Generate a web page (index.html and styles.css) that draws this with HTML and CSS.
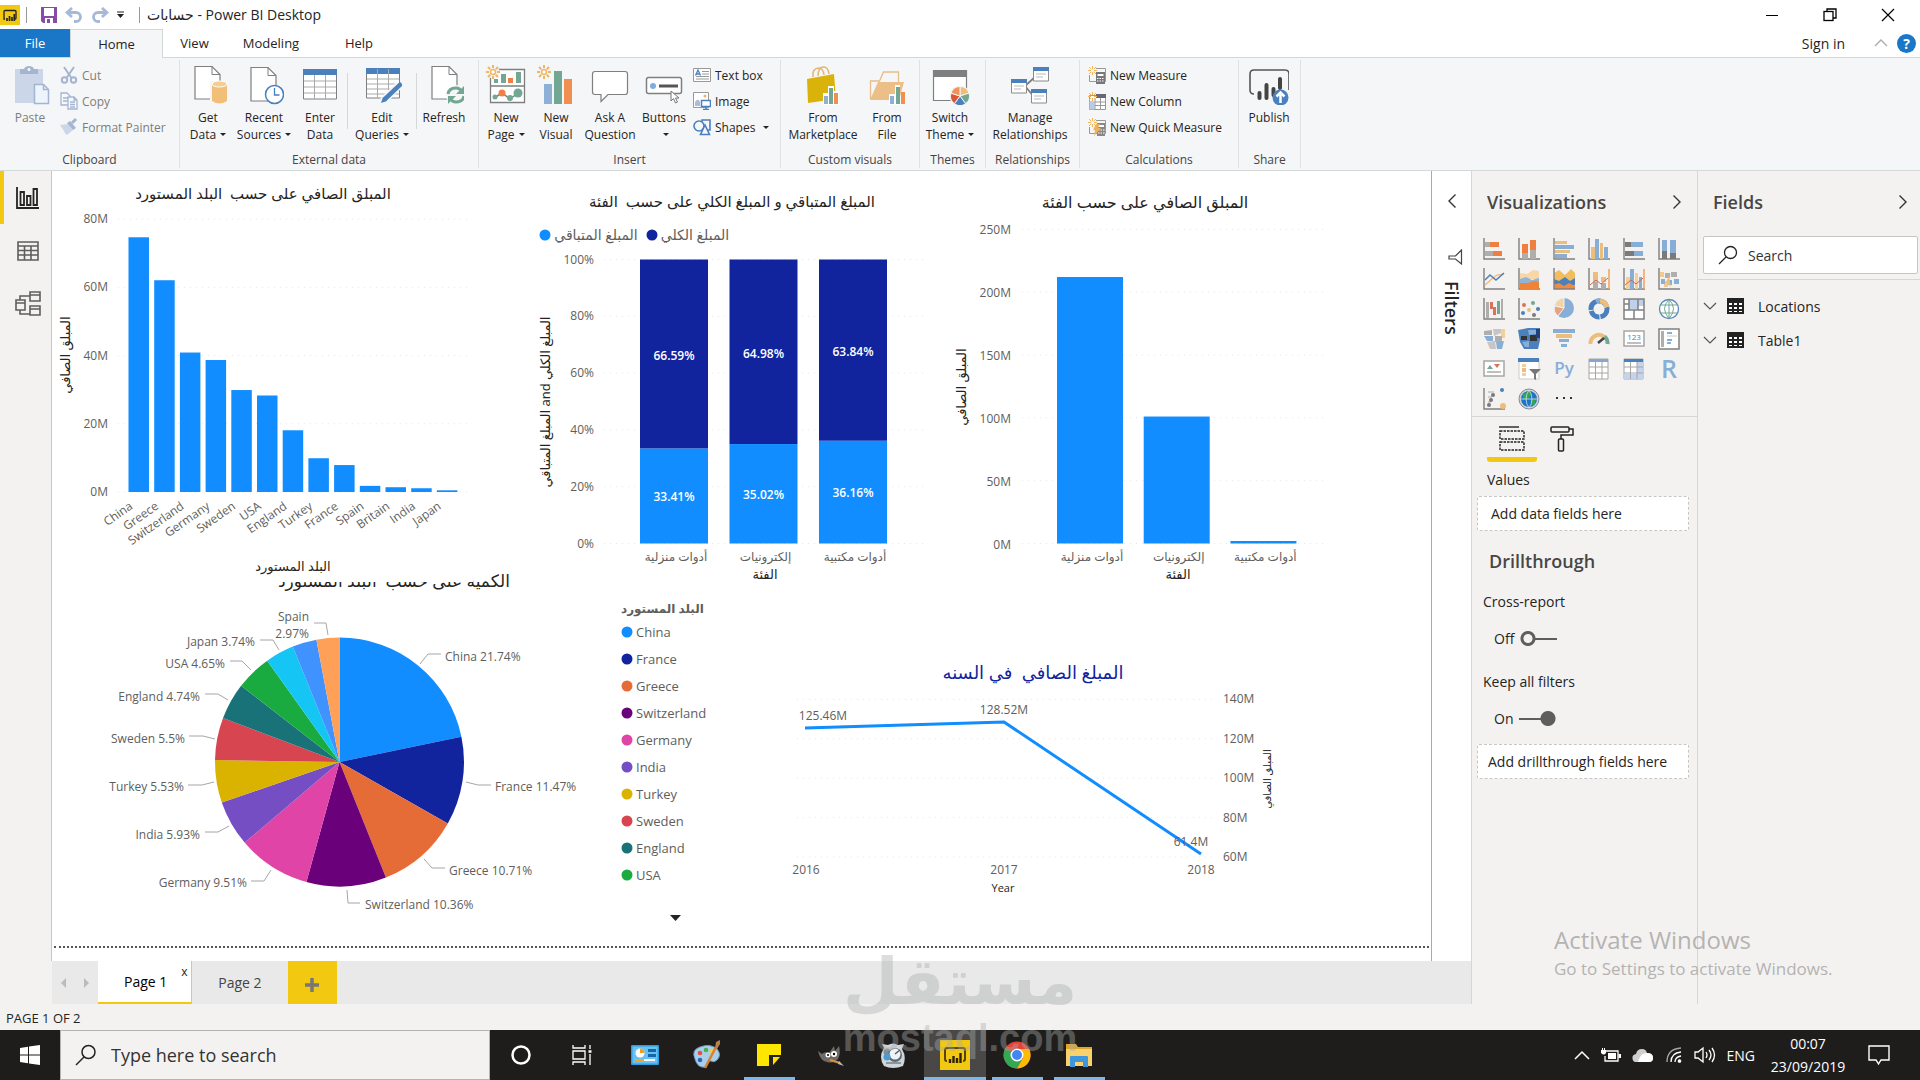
FILE: index.html
```html
<!DOCTYPE html>
<html lang="en">
<head>
    <meta charset="UTF-8">
    <meta name="viewport" content="width=device-width, initial-scale=1.0">
    <title>حسابات - Power BI Desktop</title>
    <link rel="stylesheet" href="styles.css">
</head>
<body>
<header class="titlebar">
    <svg class="app-logo" width="20" height="20" viewBox="0 0 20 20"><rect width="20" height="20" fill="#f2c811"/><path d="M5 14H4V6.500Q4 5.500 5 5.500H15Q16 5.500 16 6.500V13Q16 14 15 14" fill="none" stroke="#222" stroke-width="1.300"/><path d="M7 16v-3M9.500 16v-5M12 16v-4M14.300 16V9" stroke="#222" stroke-width="1.700"/></svg>
    <span class="divider"></span>
    <button class="quick" aria-label="Save"><svg width="16" height="16" viewBox="0 0 16 16"><path d="M0 0h16v16H2l-2-2z" fill="#864da8"/><rect x="3" y="1" width="10" height="8" fill="#fff"/><rect x="4" y="11" width="8" height="5" fill="#fff"/><rect x="6" y="12" width="3" height="4" fill="#864da8"/></svg></button>
    <button class="quick" aria-label="Undo"><svg width="18" height="16" viewBox="0 0 18 16"><path d="M7 1L2 5.500l5 4.500M2 5.500h9a4.500 4.500 0 0 1 0 9H9" fill="none" stroke="#a6b9d8" stroke-width="2.800"/></svg></button>
    <button class="quick" aria-label="Redo"><svg width="18" height="16" viewBox="0 0 18 16"><path d="M11 1l5 4.500-5 4.500M16 5.500H7a4.500 4.500 0 0 0 0 9h2" fill="none" stroke="#a6b9d8" stroke-width="2.800"/></svg></button>
    <button class="quick" aria-label="Customize"><svg width="8" height="8" viewBox="0 0 8 8"><path d="M0 1h7" stroke="#222"/><path d="M0 3h7L3.500 7z" fill="#222"/></svg></button>
    <span class="divider"></span>
    <span class="window-title">حسابات - Power BI Desktop</span>
    <div class="window-buttons">
        <button aria-label="Minimize"><svg width="14" height="14" viewBox="0 0 14 14"><path d="M1 7.500h12" stroke="#000"/></svg></button>
        <button aria-label="Restore"><svg width="14" height="14" viewBox="0 0 14 14" fill="none" stroke="#000" stroke-width="1.300"><rect x="1" y="3.500" width="9" height="9"/><path d="M4 3.500V1h9v9h-3"/></svg></button>
        <button aria-label="Close"><svg width="14" height="14" viewBox="0 0 14 14"><path d="M1 1l12 12M13 1L1 13" stroke="#000" stroke-width="1.200"/></svg></button>
    </div>
</header>

<nav class="ribbon-tabs">
    <a class="file" href="#">File</a>
    <a class="home" href="#">Home</a>
    <a class="view" href="#">View</a>
    <a class="modeling" href="#">Modeling</a>
    <a class="help" href="#">Help</a>
    <div class="account">
        <a href="#">Sign in</a>
        <button aria-label="Collapse ribbon"><svg width="14" height="8" viewBox="0 0 14 8"><path d="M1 7l6-6 6 6" fill="none" stroke="#aaa" stroke-width="1.300"/></svg></button>
        <button class="help-button" aria-label="Help">?</button>
    </div>
</nav>

<div class="ribbon">
    <section class="group clipboard">
        <div class="tools">
            <button class="big disabled">
                <svg width="40" height="40" viewBox="0 0 40 40"><path d="M5 4h28v34H5z" fill="#cbd6e8"/><path d="M10 9V4h4q1-3 5-3t5 3h4v5z" fill="#a4b5d1"/><circle cx="19" cy="4.500" r="1.500" fill="#f5f6f7"/><path d="M24.500 19.500h9l5 5v14h-14z" fill="#eef4fd" stroke="#a4b5d1" stroke-width="1.500"/><path d="M33.500 19.500v5h5" fill="none" stroke="#a4b5d1" stroke-width="1.500"/></svg>
                <span>Paste</span>
            </button>
            <div class="stack">
                <button class="small disabled"><svg width="18" height="18" viewBox="0 0 18 18" fill="none" stroke="#a4b5d1" stroke-width="2"><path d="M4 1l7.500 11M14 1L6.500 12"/><circle cx="4.500" cy="14" r="2.700"/><circle cx="13.500" cy="14" r="2.700"/></svg>Cut</button>
                <button class="small disabled"><svg width="18" height="18" viewBox="0 0 18 18" fill="#f5f8fd" stroke="#a4b5d1" stroke-width="1.300"><path d="M1 1h6l3 3v9H1zM3 6h5M3 9h5"/><path d="M8 5h6l3 3v9H8zM14 5v3h3M10 10h5M10 12.500h5M10 15h5"/></svg>Copy</button>
                <button class="small disabled"><svg width="18" height="18" viewBox="0 0 18 18"><path d="M0 7l8-1 5 6-6 5q-3-2-3-4z" fill="#cbd6e8"/><path d="M7 5l3-2 6 7-3 2z" fill="#a4b5d1"/><path d="M12 5l4-4" stroke="#a4b5d1" stroke-width="3"/></svg>Format Painter</button>
            </div>
        </div>
        <h2>Clipboard</h2>
    </section>

    <section class="group external">
        <div class="tools">
            <button class="big w52"><svg width="40" height="40" viewBox="0 0 40 40"><path d="M7 1.500h17l8 8V34H7z" fill="#fff" stroke="#7f7f7f" stroke-width="1.200"/><path d="M24 1.500v8h8" fill="none" stroke="#7f7f7f"/><rect x="22" y="16" width="18" height="24" fill="#f5f6f7"/><path d="M24 19v17q7.500 5 15 0V19z" fill="#f2bf78"/><ellipse cx="31.500" cy="19" rx="7.500" ry="3" fill="#f5cd93" stroke="#fff"/></svg><span>Get<br>Data<i class="caret"></i></span></button>
            <button class="big w60"><svg width="40" height="40" viewBox="0 0 40 40"><path d="M7 2.500h17l8 8V36H7z" fill="#fff" stroke="#7f7f7f" stroke-width="1.200"/><path d="M24 2.500v8h8" fill="none" stroke="#7f7f7f"/><circle cx="30.500" cy="29.500" r="9" fill="#fff" stroke="#4a7fc1" stroke-width="1.500"/><path d="M30.500 23v7h5" fill="none" stroke="#4a7fc1" stroke-width="1.300"/></svg><span>Recent<br>Sources<i class="caret"></i></span></button>
            <button class="big w52"><svg width="40" height="40" viewBox="0 0 40 40"><path d="M3.500 5h33v29h-33z" fill="#fff" stroke="#7f7f7f"/><path d="M3 4h34v6H3z" fill="#4b80bd"/><path d="M4 16h32M4 22h32M4 28h32M14.500 10v24M25.500 10v24" stroke="#aaa"/></svg><span>Enter<br>Data</span></button>
            <i class="separator"></i>
            <button class="big w66"><svg width="40" height="40" viewBox="0 0 40 40"><path d="M4.500 4h33v29h-33z" fill="#fff" stroke="#7f7f7f"/><path d="M4 3h34v6H4z" fill="#4b80bd"/><path d="M5 14h32M5 19h32M5 24h32M5 29h32M15.500 4v29M26.500 4v29" stroke="#aaa"/><path d="M21 36L38 19" stroke="#f5f6f7" stroke-width="8"/><path d="M22.500 34.500L39.500 18.500" stroke="#4b80bd" stroke-width="4.500"/><path d="M19 38l2-6 4 4z" fill="#4b80bd"/></svg><span>Edit<br>Queries<i class="caret"></i></span></button>
            <i class="separator"></i>
            <button class="big w52"><svg width="40" height="40" viewBox="0 0 40 40"><path d="M8 1.500h17l8 8V34H8z" fill="#fff" stroke="#7f7f7f" stroke-width="1.200"/><path d="M25 1.500v8h8" fill="none" stroke="#7f7f7f"/><circle cx="32" cy="30" r="10" fill="#f5f6f7"/><path d="M24 29q1-6 8-6 4 0 6 4M40 31q-1 6-8 6-4 0-6-4" fill="none" stroke="#71a793" stroke-width="3"/><path d="M40 21v8h-8zM24 39v-8h8z" fill="#71a793"/></svg><span>Refresh</span></button>
        </div>
        <h2>External data</h2>
    </section>

    <section class="group insert">
        <div class="tools">
            <button class="big w50"><svg width="40" height="40" viewBox="0 0 40 40"><path d="M4.500 4.500h34v33h-34zM4 21h34" fill="#fff" stroke="#7f7f7f" stroke-width="1.300"/><path d="M8 14h4v4H8zM15 9h5v9h-5zM30 7h5v11h-5z" fill="#71a793"/><path d="M22 13h5v5h-5z" fill="#ee7f45"/><path d="M8 33l8-5 8 6 8-6" fill="none" stroke="#7f7f7f" stroke-width="1.500"/><circle cx="9" cy="32" r="2.500" fill="#71a793"/><circle cx="16" cy="28" r="3.500" fill="#ee7f45"/><circle cx="24" cy="33" r="3" fill="#71a793"/><circle cx="32" cy="28" r="4.500" fill="#71a793"/><circle cx="7" cy="7" r="6.500" fill="#f5f6f7"/><use href="#spark"/></svg><span>New<br>Page<i class="caret"></i></span></button>
            <button class="big w50"><svg width="40" height="40" viewBox="0 0 40 40"><path d="M8 19h8v20H8z" fill="#8db0d5"/><path d="M18 6h8v33h-8z" fill="#71a793"/><path d="M28 14h8v25h-8z" fill="#f08f50"/><use href="#spark" x="1"/></svg><span>New<br>Visual</span></button>
            <button class="big w58"><svg width="40" height="40" viewBox="0 0 40 40"><path d="M5 6.500h30q2.500 0 2.500 2.500v18q0 2.500-2.500 2.500H18l-7 7v-7H5Q2.500 29.500 2.500 27V9Q2.500 6.500 5 6.500z" fill="#fff" stroke="#7f7f7f" stroke-width="1.200"/></svg><span>Ask A<br>Question</span></button>
            <button class="big w50"><svg width="40" height="40" viewBox="0 0 40 40"><rect x="2.500" y="12.500" width="35" height="16" rx="2" fill="#fff" stroke="#7f7f7f" stroke-width="1.500"/><circle cx="9" cy="21" r="3" fill="#7facde"/><path d="M15 21h19" stroke="#555" stroke-width="3"/><path d="M27 26v10l2.500-2.500 2 4.500 2-1-2-4h3.500z" fill="#fff" stroke="#777"/></svg><span>Buttons<br><i class="caret"></i></span></button>
            <div class="stack">
                <button class="small"><svg width="18" height="18" viewBox="0 0 18 18"><path d="M.5 2.500h17v13H.5zM9 5.500h7M9 8h7M3 10.500h13M3 13h13" fill="#fff" stroke="#999"/><path d="M2.500 9.500L5 4l2.500 5.500M3.500 8h3" fill="none" stroke="#4b80bd" stroke-width="1.300"/></svg>Text box</button>
                <button class="small"><svg width="18" height="18" viewBox="0 0 18 18"><path d="M.5.500h15v15H.5z" fill="#fff" stroke="#999"/><circle cx="12" cy="4" r="1.500" fill="#efb070"/><path d="M2 14V10q3-5 5 0v4z" fill="#a9bdd9"/><path d="M8.500 8.500h9v6h-9z" fill="#fff" stroke="#4b80bd" stroke-width="1.500"/><path d="M13 14v3M10 17.500h6" stroke="#4b80bd" stroke-width="1.500"/></svg>Image</button>
                <button class="small"><svg width="18" height="18" viewBox="0 0 18 18" fill="#f5f6f7" stroke="#4b80bd" stroke-width="1.600"><path d="M9 2h8v10H9z"/><circle cx="6" cy="8" r="5"/><path d="M12 7l4.500 9.500h-9z"/></svg>Shapes<i class="caret"></i></button>
            </div>
        </div>
        <h2>Insert</h2>
    </section>

    <section class="group custom">
        <div class="tools">
            <button class="big w84"><svg width="40" height="40" viewBox="0 0 40 40"><path d="M10 12q-1-9 6-9 4 0 5 7M15 11q0-9 6-9 4 0 5 7" fill="none" stroke="#e5b574" stroke-width="1.500"/><path d="M4 14l27-5 2 25-28 4z" fill="#d9b30a"/><path d="M20 28h6v12h-6z" fill="#fff"/><path d="M21 31h4v8h-4z" fill="#8db0d5"/><path d="M25 21h6v19h-6z" fill="#fff"/><path d="M26 23h4v16h-4z" fill="#71a793"/><path d="M30 26h6v14h-6z" fill="#fff"/><path d="M31 28h4v11h-4z" fill="#f08f50"/></svg><span>From<br>Marketplace</span></button>
            <button class="big w44"><svg width="40" height="40" viewBox="0 0 40 40"><path d="M3.500 34V16h9l4-9h15v10" fill="none" stroke="#e9bd89" stroke-width="1.300"/><path d="M3 35l8-18h26l-5 18z" fill="#ecbf88"/><path d="M22 29h6v11h-6z" fill="#fff"/><path d="M23 31h4v8h-4z" fill="#8db0d5"/><path d="M28 20h5v20h-5z" fill="#fff"/><path d="M29 22h4v17h-4z" fill="#71a793"/><path d="M34 27h4v12h-4z" fill="#f08f50"/></svg><span>From<br>File</span></button>
        </div>
        <h2>Custom visuals</h2>
    </section>

    <section class="group themes">
        <div class="tools">
            <button class="big w60"><svg width="40" height="40" viewBox="0 0 40 40"><path d="M3.500 5.500h33v30h-33z" fill="#fff" stroke="#7f7f7f" stroke-width="1.200"/><path d="M3 5h34v7H3z" fill="#7f7f7f"/><circle cx="30" cy="31" r="10.500" fill="#f5f6f7"/><g stroke="#f5f6f7"><path d="M30 31V21.500a9.500 9.500 0 0 1 9 6.600z" fill="#f0bd74"/><path d="M30 31l9-2.900a9.500 9.500 0 0 1-3.400 10.600z" fill="#71a793"/><path d="M30 31l5.600 7.700a9.500 9.500 0 0 1-11.200 0z" fill="#4b80bd"/><path d="M30 31l-5.600 7.700A9.500 9.500 0 0 1 21 28.100z" fill="#d9583b"/><path d="M30 31l-9-2.900a9.500 9.500 0 0 1 9-6.600z" fill="#ee9457"/></g></svg><span>Switch<br>Theme<i class="caret"></i></span></button>
        </div>
        <h2>Themes</h2>
    </section>

    <section class="group relations">
        <div class="tools">
            <button class="big w84"><svg width="40" height="40" viewBox="0 0 40 40"><path d="M15 21l10-9M15 21l10 12" stroke="#7f7f7f" stroke-width="1.800"/><g fill="#fff" stroke="#8a8a8a"><path d="M1.500 15h15v13h-15zM23.500 3h15v13h-15zM21.500 25h15v13h-15z"/><path d="M4 21h10M4 24h7M26 9h10M26 12h7M24 31h10M24 34h7" stroke="#bbb"/></g><path d="M1 14h16v4H1zM23 2h16v4H23zM21 24h16v4H21z" fill="#4b80bd"/></svg><span>Manage<br>Relationships</span></button>
        </div>
        <h2>Relationships</h2>
    </section>

    <section class="group calc">
        <div class="tools">
            <div class="stack">
                <button class="small"><svg width="18" height="18" viewBox="0 0 18 18"><path d="M8 2.500h9.500v13H1.500V9" fill="none" stroke="#999"/><rect x="8" y="6" width="9" height="12" fill="#777"/><path d="M9.500 8h6v2h-6z" fill="#fff"/><path d="M9 12.500h7M9 15h7" stroke="#fff" stroke-dasharray="1.500 1"/><use href="#tinyspark"/></svg>New Measure</button>
                <button class="small"><svg width="18" height="18" viewBox="0 0 18 18"><path d="M1.500 3.500h16v14h-16z" fill="#fff" stroke="#999"/><path d="M8 2h10v4H8z" fill="#667"/><path d="M1.500 9h5v8.500h-5z" fill="#b9cbe6"/><path d="M7 6v11M12.500 6v11M7 10h11M7 13.500h11" stroke="#999"/><use href="#tinyspark"/></svg>New Column</button>
                <button class="small"><svg width="18" height="18" viewBox="0 0 18 18"><path d="M8 2.500h9.500v13H1.500V9" fill="none" stroke="#999"/><rect x="9" y="5" width="8" height="13" fill="#888"/><path d="M10 7h6v2h-6z" fill="#fff"/><path d="M10 12h7M10 15h7" stroke="#fff" stroke-dasharray="1.500 1"/><path d="M8 6h4l-2 4h3l-7 8 1-6H5z" fill="#efb25c"/><use href="#tinyspark"/></svg>New Quick Measure</button>
            </div>
        </div>
        <h2>Calculations</h2>
    </section>

    <section class="group share">
        <div class="tools">
            <button class="big w60"><svg width="40" height="40" viewBox="0 0 40 40"><path d="M5 29Q1 29 1 25V9q0-4 4-4h31q4 0 4 4v16" fill="none" stroke="#555" stroke-width="1.600"/><path d="M10.500 33v-5M17.500 33V20M24.500 30v-6M31 23V14" stroke="#444" stroke-width="4" stroke-linecap="round"/><circle cx="31.500" cy="32.500" r="8" fill="#4a7fc1"/><path d="M31.500 38V28M27.500 31.500l4-4 4 4" fill="none" stroke="#fff" stroke-width="2.500"/></svg><span>Publish</span></button>
        </div>
        <h2>Share</h2>
    </section>
</div>

<!-- shared sparkle shapes used by the ribbon icons -->
<svg class="defs" width="0" height="0" aria-hidden="true">
    <defs>
        <g id="spark" stroke="#eeb768" stroke-width="2"><circle cx="7" cy="7" r="2.500" fill="#fff" stroke-width="1.500"/><path d="M7 0v3M7 11v3M0 7h3M11 7h3M2 2l2.200 2.200M9.800 9.800L12 12M12 2L9.800 4.200M4.200 9.800L2 12"/></g>
        <g id="tinyspark" stroke="#eeb768"><path d="M4.500 0v3M4.500 6v3M0 4.500h3M6 4.500h3M1 1l2.200 2.200M5.800 5.800L8 8M8 1L5.800 3.200M3.200 5.800L1 8"/></g>
    </defs>
</svg>

<main class="workspace">
    <div class="left">
        <div class="stage">
            <nav class="rail">
                <button class="active" aria-label="Report"><svg width="26" height="26" viewBox="0 0 26 26" fill="none" stroke="#252423" stroke-width="1.800"><path d="M2 2v21h22M5.500 7h3.500v13H5.500zM12 11h3.500v9H12zM18.500 4H22v16h-3.500z"/></svg></button>
                <button aria-label="Data"><svg width="26" height="26" viewBox="0 0 26 26" fill="none" stroke="#605e5c" stroke-width="1.600"><path d="M3 4h20v18H3zM3 8h20M3 12.500h20M3 17h20M9.500 8v14M16 8v14"/></svg></button>
                <button aria-label="Model"><svg width="26" height="26" viewBox="0 0 26 26" fill="none" stroke="#605e5c" stroke-width="1.600"><path d="M15 1h10v9H15zM15 4h10M1 9h9v10H1zM1 12h9M15 15h10v9H15zM15 18h10M5 9V5h10M5 19v4h10"/></svg></button>
            </nav>

            <div class="canvas">
                <div class="row-top">
                    <section class="visual cover">
                        <svg id="countryBars" viewBox="52 171 421 411" role="img" aria-label="Net amount by country"></svg>
                    </section>
                    <section class="visual">
                        <svg id="stackedBars" viewBox="473 171 458 411" role="img" aria-label="Remaining and total amount by category"></svg>
                    </section>
                    <section class="visual">
                        <svg id="categoryBars" viewBox="931 171 500 411" role="img" aria-label="Net amount by category"></svg>
                    </section>
                </div>
                <div class="row-bottom">
                    <section class="visual">
                        <svg id="pie" viewBox="52 582 560 364" role="img" aria-label="Quantity by country"></svg>
                    </section>
                    <section class="legend">
                        <h3>البلد المستورد</h3>
                        <ul id="legendList"></ul>
                        <button aria-label="More"><svg width="11" height="6" viewBox="0 0 11 6"><path d="M0 0h11L5.500 6z" fill="#252423"/></svg></button>
                    </section>
                    <section class="visual">
                        <svg id="line" viewBox="790 582 641 364" role="img" aria-label="Net amount by year"></svg>
                    </section>
                </div>
                <div class="page-edge"></div>
            </div>

            <aside class="filters">
                <button aria-label="Expand filters"><svg width="10" height="16" viewBox="0 0 10 16"><path d="M8.500 1.500L2 8l6.500 6.500" fill="none" stroke="#333" stroke-width="1.400"/></svg></button>
                <svg width="16" height="16" viewBox="0 0 16 16"><path d="M14.500 1v14l-6-5H2V7h6.500z" fill="none" stroke="#444" stroke-width="1.200"/></svg>
                <h2>Filters</h2>
            </aside>
        </div>

        <div class="page-tabs">
            <button class="arrow" aria-label="Previous page"><svg width="7" height="12" viewBox="0 0 7 12"><path d="M6 1v10L1 6z" fill="#bbb"/></svg></button>
            <button class="arrow" aria-label="Next page"><svg width="7" height="12" viewBox="0 0 7 12"><path d="M1 1v10l5-5z" fill="#bbb"/></svg></button>
            <button class="page current">Page 1</button>
            <button class="close" aria-label="Delete page">x</button>
            <button class="page">Page 2</button>
            <button class="add" aria-label="New page"><svg width="14" height="14" viewBox="0 0 14 14"><path d="M7 0v14M0 7h14" stroke="#777" stroke-width="3.500"/></svg></button>
        </div>
    </div>

    <aside class="viz">
        <div class="pane-head"><h2>Visualizations</h2><button aria-label="Collapse"><svg width="10" height="16" viewBox="0 0 10 16"><path d="M1.500 1.500L8 8l-6.500 6.500" fill="none" stroke="#333" stroke-width="1.400"/></svg></button></div>
        <div class="viz-grid" id="vizGrid"></div>
        <div class="viz-tabs">
            <button class="on" aria-label="Fields"><svg width="26" height="26" viewBox="0 0 26 26" fill="none" stroke="#252423" stroke-width="1.400"><path d="M0 1h20"/><path d="M1 5h24v8H1zM1 16h24v8H1z" stroke-dasharray="2.500 1"/></svg></button>
            <button aria-label="Format"><svg width="26" height="26" viewBox="0 0 26 26" fill="none" stroke="#252423" stroke-width="1.500"><rect x="2" y="1" width="18" height="5" rx="1"/><path d="M20 3h4v6H12v4"/><rect x="9.500" y="13" width="5" height="12" rx="1"/></svg></button>
        </div>
        <h3>Values</h3>
        <div class="dropzone">Add data fields here</div>
        <h2 class="drill">Drillthrough</h2>
        <h3 class="inset">Cross-report</h3>
        <label class="toggle"><span>Off</span><input type="checkbox"></label>
        <h3 class="inset">Keep all filters</h3>
        <label class="toggle"><span>On</span><input type="checkbox" checked></label>
        <div class="dropzone second">Add drillthrough fields here</div>
    </aside>

    <aside class="fields">
        <div class="pane-head"><h2>Fields</h2><button aria-label="Collapse"><svg width="10" height="16" viewBox="0 0 10 16"><path d="M1.500 1.500L8 8l-6.500 6.500" fill="none" stroke="#333" stroke-width="1.400"/></svg></button></div>
        <label class="field-search">
            <svg width="20" height="20" viewBox="0 0 20 20"><circle cx="12.500" cy="7.500" r="6" fill="none" stroke="#252423" stroke-width="1.300"/><path d="M8 12l-7 7" stroke="#252423" stroke-width="1.300"/></svg>
            <input type="search" placeholder="Search" aria-label="Search fields">
        </label>
        <ul class="tables">
            <li><button><svg width="14" height="9" viewBox="0 0 14 9"><path d="M1 1l6 6 6-6" fill="none" stroke="#555" stroke-width="1.200"/></svg><svg width="17" height="16" viewBox="0 0 17 16"><path d="M0 0h17v16H0z" fill="#222"/><path d="M2 5h3v2H2zM7 5h3v2H7zM12 5h3v2h-3zM2 9h3v2H2zM7 9h3v2H7zM12 9h3v2h-3zM2 13h3v1H2zM7 13h3v1H7zM12 13h3v1h-3z" fill="#fff"/></svg><span>Locations</span></button></li>
            <li><button><svg width="14" height="9" viewBox="0 0 14 9"><path d="M1 1l6 6 6-6" fill="none" stroke="#555" stroke-width="1.200"/></svg><svg width="17" height="16" viewBox="0 0 17 16"><path d="M0 0h17v16H0z" fill="#222"/><path d="M2 5h3v2H2zM7 5h3v2H7zM12 5h3v2h-3zM2 9h3v2H2zM7 9h3v2H7zM12 9h3v2h-3zM2 13h3v1H2zM7 13h3v1H7zM12 13h3v1h-3z" fill="#fff"/></svg><span>Table1</span></button></li>
        </ul>
    </aside>
</main>

<div class="status">PAGE 1 OF 2</div>

<footer class="taskbar">
    <button class="start-button" aria-label="Start"><svg width="20" height="20" viewBox="0 0 20 20" fill="#fff"><path d="M0 3l8-1.200V9.500H0zM9 1.600L20 0v9.500H9zM0 10.500h8v7.700L0 17zM9 10.500h11V20L9 18.400z"/></svg></button>
    <label class="task-search">
        <svg width="22" height="22" viewBox="0 0 22 22"><circle cx="13.500" cy="8" r="6.500" fill="none" stroke="#222" stroke-width="1.500"/><path d="M9 13l-8 8" stroke="#222" stroke-width="1.500"/></svg>
        <input type="text" placeholder="Type here to search" aria-label="Search Windows">
    </label>
    <div class="apps">
        <button aria-label="Cortana"><svg width="22" height="22" viewBox="0 0 22 22"><circle cx="11" cy="11" r="8.500" fill="none" stroke="#fff" stroke-width="2.500"/></svg></button>
        <button aria-label="Task view"><svg width="22" height="22" viewBox="0 0 22 22" fill="none" stroke="#fff" stroke-width="1.300"><path d="M1 1v3h12V1M1 7h12v8H1zM1 21v-3h12v3M18 1v4M18 10v11"/><path d="M16.500 7.500h3" stroke-width="2.500"/></svg></button>
        <button aria-label="Control panel"><svg width="28" height="20" viewBox="0 0 28 20"><rect width="28" height="20" rx="1" fill="#2f9bdc"/><rect x="1.500" y="1.500" width="25" height="17" fill="#68c1f3"/><circle cx="9" cy="8" r="4.500" fill="#fff"/><path d="M9 8V3.500A4.500 4.500 0 0 1 13.500 8z" fill="#f39b21"/><path d="M17 4h8v3h-8zM17 9h8v3h-8z" fill="#1565a9"/><path d="M4 15h20" stroke="#fff" stroke-width="2"/><path d="M4 15h9" stroke="#f9a825" stroke-width="2"/></svg></button>
        <button aria-label="Paint"><svg width="30" height="30" viewBox="0 0 30 30"><path d="M3 19Q-1 10 8 7q10-4 17 2 5 6 0 11-3 3-6 1-3-1-4 2 0 5-5 4-5-1-7-8z" fill="#a9cfe9" stroke="#6a9cc4"/><circle cx="8" cy="13" r="2.300" fill="#e5513b"/><circle cx="14" cy="10" r="2.300" fill="#4caf50"/><circle cx="20" cy="11" r="2.300" fill="#f7cb3a"/><circle cx="8" cy="20" r="2.300" fill="#2b68bd"/><path d="M13 28L24 7" stroke="#d9822b" stroke-width="2.500"/><path d="M23 8l1-6 4-2v4l-3 5z" fill="#b58247"/></svg></button>
        <button class="open" aria-label="Sticky notes"><svg width="24" height="24" viewBox="0 0 24 24"><path d="M0 1h24v12l-9 10H0z" fill="#ffe600"/><path d="M12 12h12v2l-8 9h-4z" fill="#222"/><path d="M23 14l-7 8v-8z" fill="#ffe600"/></svg></button>
        <button aria-label="GIMP"><svg width="28" height="22" viewBox="0 0 28 22"><path d="M1 7l4 3q3-3 7-1l5-7 1 5 4-5q2 7-1 13-5 5-11 3Q3 17 1 7z" fill="#6e6a66"/><circle cx="11" cy="11" r="2.500" fill="#fff"/><circle cx="17" cy="10" r="3" fill="#fff"/><circle cx="11" cy="11" r="1"/><circle cx="17" cy="10" r="1.200"/><path d="M13 16l10 3" stroke="#e0913d" stroke-width="2"/><path d="M22 17l5 5-6-2z" fill="#bbb"/></svg></button>
        <button aria-label="Utility"><svg width="30" height="26" viewBox="0 0 30 26"><path d="M6 6L4 2l6 1q5-3 10 0l6-1-2 5q5 8 1 17-10 4-19 0Q0 15 6 6z" fill="#cfd6da"/><circle cx="9" cy="10" r="3.500" fill="#7d8b95"/><circle cx="17" cy="13" r="7" fill="#5a6a77"/><circle cx="17" cy="12" r="5.500" fill="#eef3f6"/><circle cx="9" cy="15" r="3.500" fill="#4a9ad4"/><path d="M17 12l5-4" stroke="#555" stroke-width="1.500"/><path d="M8 21h15" stroke="#8b969c" stroke-width="2"/></svg></button>
        <button class="open focused" aria-label="Power BI Desktop"><svg width="30" height="30" viewBox="0 0 30 30"><rect width="30" height="30" fill="#f2c811"/><path d="M7 21q-2 0-2-2V10q0-2 2-2h16q2 0 2 2v9q0 2-2 2" fill="none" stroke="#5b4200" stroke-width="2"/><path d="M10 23v-4M13.500 23v-7M17 23v-5M20.500 23V13" stroke="#2f2300" stroke-width="2.400"/></svg></button>
        <button class="open" aria-label="Chrome"><svg width="28" height="28" viewBox="0 0 28 28"><circle cx="14" cy="14" r="13.500" fill="#e94235"/><path d="M14 14L2.300 7.300A13.500 13.500 0 0 0 14 27.500l5.500-9.500z" fill="#34a853"/><path d="M14 8h12.200A13.500 13.500 0 0 1 14 27.500L20 17z" fill="#fbbc05"/><circle cx="14" cy="14" r="6.500" fill="#fff"/><circle cx="14" cy="14" r="5" fill="#4285f4"/></svg></button>
        <button class="open" aria-label="File explorer"><svg width="28" height="24" viewBox="0 0 28 24"><path d="M1 1h10l2 3h14v19H1z" fill="#e3a42c"/><path d="M1 6h26v17H1z" fill="#f9d26b"/><path d="M5 14q0-1 1-1h16q1 0 1 1v10h-5v-5h-8v5H5z" fill="#3e97dc"/></svg></button>
    </div>
    <div class="tray">
        <svg width="16" height="10" viewBox="0 0 16 10"><path d="M1 9l7-7 7 7" fill="none" stroke="#fff" stroke-width="1.500"/></svg>
        <svg width="20" height="14" viewBox="0 0 20 14"><path d="M5 3h12v10H4V8" fill="none" stroke="#fff" stroke-width="1.300"/><path d="M7 5h8v6H7zM17.500 6H20v4h-2.500zM0 2h5v3q-2 3-5 0zM1 0h1v2H1zM3 0h1v2H3z" fill="#fff"/></svg>
        <svg width="22" height="14" viewBox="0 0 22 14"><path d="M5 14a4 4 0 0 1-1-8q1-5 6-5 4 0 5 4 6 0 6 5 0 4-4 4z" fill="#cfcfcf"/><path d="M15 5q-7 0-9 9h11q4 0 4-4 0-5-6-5z" fill="#fff"/></svg>
        <svg width="18" height="18" viewBox="0 0 18 18" fill="none" stroke="#fff" stroke-width="1.300"><path d="M2 16Q2 3 16 2" opacity=".6"/><path d="M6 16Q6 7 16 6M10 16q0-5 6-6"/><circle cx="14.500" cy="15" r="1.200" fill="#fff"/></svg>
        <svg width="22" height="18" viewBox="0 0 22 18" fill="none" stroke="#fff" stroke-width="1.300"><path d="M1 6h3l5-4v14l-5-4H1zM12 6q2 3 0 6M15 4q4 5 0 10M18 2q5 7 0 14"/></svg>
        <span>ENG</span>
        <time>00:07<br>23/09/2019</time>
        <svg class="notify" width="22" height="22" viewBox="0 0 22 22"><path d="M1 2h20v14h-8l-2.500 4L8 16H1z" fill="none" stroke="#fff" stroke-width="1.400"/></svg>
    </div>
</footer>

<div class="activate">
    <strong>Activate Windows</strong>
    <span>Go to Settings to activate Windows.</span>
</div>
<div class="watermark" aria-hidden="true">
    <span lang="ar">مستقل</span>
    <span class="site">mostaql.com</span>
</div>

<script>
    // Small helpers for building svg markup
    function text(x, y, content, cls, extra) {
        return `<text x="${x}" y="${y}" class="${cls || "tick"}" ${extra || ""}>${content}</text>`;
    }

    function rect(x, y, w, h, color) {
        return `<rect x="${x}" y="${y}" width="${w}" height="${h}" fill="${color}"/>`;
    }

    function grid(x1, x2, y) {
        return `<path d="M${x1} ${y}H${x2}" class="gridline"/>`;
    }

    function vertical(x, y, content) {
        return text(x, y, content, "axis", `transform="rotate(-90 ${x} ${y})"`);
    }

    const countries = [
        ["China", 74.7], ["Greece", 62.1], ["Switzerland", 40.9], ["Germany", 38.7], ["Sweden", 29.9],
        ["USA", 28.3], ["England", 18.1], ["Turkey", 9.9], ["France", 7.9], ["Spain", 1.8],
        ["Britain", 1.4], ["India", 1.1], ["Japan", 0.5]
    ];

    function drawCountries() {
        const zero = 492;
        let out = text(263, 199, "المبلق الصافي على حسب&nbsp; البلد المستورد", "title long");
        for (let v = 0; v <= 80; v += 20) {
            const y = zero - v * 3.41;
            out += grid(118, 468, y) + text(108, y + 4, v + "M", "tick end");
        }
        countries.forEach(function (c, i) {
            const x = 128.5 + i * 25.7;
            out += rect(x, zero - c[1] * 3.41, 20.5, c[1] * 3.41, "#118dff");
            out += text(x + 5, zero + 16, c[0], "tick end", `transform="rotate(-35 ${x + 5} ${zero + 16})"`);
        });
        out += vertical(70, 355, "المبلق الصافي") + text(293, 571, "البلد المستورد", "axis");
        document.getElementById("countryBars").innerHTML = out;
    }

    const categories = ["أدوات منزلية", "إلكترونيات", "أدوات مكتبية"];

    function drawStacked() {
        const zero = 543.5, full = 284;
        let out = text(732, 207, "المبلغ المتباقي و المبلغ الكلي على حسب&nbsp; الفئة", "title long");
        out += `<circle cx="545" cy="235" r="5.500" fill="#118dff"/><circle cx="652" cy="235" r="5.500" fill="#12239e"/>`;
        out += text(596, 240, "المبلغ المتباقي", "key") + text(695, 240, "المبلغ الكلي", "key");
        for (let v = 0; v <= 100; v += 20) {
            const y = zero - v * full / 100;
            out += grid(604, 924, y) + text(594, y + 4, v + "%", "tick end");
        }
        [33.41, 35.02, 36.16].forEach(function (v, i) {
            const x = 640 + i * 89.5;
            const low = v * full / 100;
            out += rect(x, zero - full, 68, full - low, "#12239e") + rect(x, zero - low, 68, low, "#118dff");
            out += text(x + 34, zero - low / 2 + 5, v + "%", "value");
            out += text(x + 34, zero - low - (full - low) / 2 + 6, (100 - v).toFixed(2) + "%", "value");
            out += text(x + 36, 561, categories[i], "tick");
        });
        out += vertical(550, 402, "المبلغ المتباقي and المبلغ الكلي") + text(765, 579, "الفئة", "axis");
        document.getElementById("stackedBars").innerHTML = out;
    }

    function drawCategories() {
        const zero = 543.5;
        let out = text(1145, 208, "المبلق الصافي على حسب الفئة", "title");
        for (let v = 0; v <= 250; v += 50) {
            const y = zero - v * 1.257;
            out += grid(1022, 1324, y) + text(1011, y + 5, v + "M", "tick end");
        }
        [212, 101, 2].forEach(function (v, i) {
            const x = 1057 + i * 86.7;
            out += rect(x, zero - v * 1.257, 66, v * 1.257, "#118dff");
            out += text(x + 35, 561, categories[i], "tick");
        });
        out += vertical(966, 387, "المبلق الصافي") + text(1178, 579, "الفئة", "axis");
        document.getElementById("categoryBars").innerHTML = out;
    }

    // name, share, colour, label x, label y, anchor, leader line
    const slices = [
        ["China", 21.74, "#118dff", 445, 661, "start", "420,664 428,654 441,654"],
        ["France", 11.47, "#12239e", 495, 791, "start", "466,782 478,785 491,785"],
        ["Greece", 10.71, "#e66c37", 449, 875, "start", "424,859 432,868 445,868"],
        ["Switzerland", 10.36, "#6b007b", 365, 909, "start", "347,890 348,903 360,903"],
        ["Germany", 9.51, "#e044a7", 247, 887, "end", "271,870 264,881 251,881"],
        ["India", 5.93, "#744ec2", 200, 839, "end", "229,826 218,832 205,832"],
        ["Turkey", 5.53, "#d9b300", 184, 791, "end", "214,782 202,785 188,785"],
        ["Sweden", 5.5, "#d64550", 185, 743, "end", "215,739 203,736 189,736"],
        ["England", 4.74, "#197278", 200, 701, "end", "228,700 218,694 205,694"],
        ["USA", 4.65, "#1aab40", 225, 668, "end", "251,670 242,661 230,661"],
        ["Japan", 3.74, "#15c6f4", 255, 646, "end", "279,650 273,640 260,640"],
        ["Britain", 3.15, "#4092ff"],
        ["Spain", 2.97, "#ffa058", 309, 621, "end", "328,635 326,623 314,623"]
    ];

    function drawPie() {
        const cx = 339.5, cy = 762, r = 124.5;
        let angle = 0;
        let out = text(394, 587, "الكمية على حسب&nbsp; البلد المستورد", "title wide");
        slices.forEach(function (s) {
            const next = angle + s[1] / 100 * Math.PI * 2;
            const x1 = cx + r * Math.sin(angle), y1 = cy - r * Math.cos(angle);
            const x2 = cx + r * Math.sin(next), y2 = cy - r * Math.cos(next);
            out += `<path d="M${cx} ${cy}L${x1} ${y1}A${r} ${r} 0 0 1 ${x2} ${y2}z" fill="${s[2]}"/>`;
            angle = next;
            if (!s[3]) return;
            out += `<polyline points="${s[6]}" class="leader"/>`;
            if (s[0] === "Spain") {
                out += text(s[3], s[4], s[0], "tick end") + text(s[3], s[4] + 17, s[1] + "%", "tick end");
            } else {
                out += text(s[3], s[4], s[0] + " " + s[1] + "%", "tick " + s[5]);
            }
        });
        document.getElementById("pie").innerHTML = out;

        document.getElementById("legendList").innerHTML = slices.slice(0, 10).map(function (s) {
            return `<li><svg width="12" height="12" viewBox="0 0 12 12"><circle cx="6" cy="6" r="5.500" fill="${s[2]}"/></svg>${s[0]}</li>`;
        }).join("");
    }

    function drawLine() {
        let out = text(1033, 679, "المبلغ الصافي&nbsp; في السنه", "title navy");
        for (let v = 60; v <= 140; v += 20) {
            const y = 857 - (v - 60) * 1.97;
            out += grid(797, 1212, y) + text(1223, y + 4, v + "M", "tick start");
        }
        out += `<polyline points="805,728 1004,722 1201,854" fill="none" stroke="#118dff" stroke-width="3"/>`;
        out += text(823, 720, "125.46M") + text(1004, 714, "128.52M") + text(1191, 846, "61.4M");
        out += text(806, 874, "2016") + text(1004, 874, "2017") + text(1201, 874, "2018");
        out += text(1003, 892, "Year", "axis year");
        out += text(1271, 779, "المبلق الصافي", "axis small-axis", `transform="rotate(-90 1271 779)"`);
        document.getElementById("line").innerHTML = out;
    }

    // Icons of the visual gallery, drawn on a 22x22 box
    const A = `<path d="M1 0v21h21" fill="none" stroke="#808080" stroke-width="1.400"/>`;
    const frame = `<path d="M1 3h20v15H1z" fill="#fff" stroke="#a6a6a6" stroke-width="1.500"/>`;
    const vizIcons = {
        "Stacked bar chart": `${A}<path d="M2 4h5v5H2zM2 13h8v5H2z" fill="#b0aeac"/><path d="M7 4h9v5H7zM10 13h9v5h-9z" fill="#ee7f3f"/>`,
        "Stacked column chart": `${A}<path d="M4 15h6v6H4zM12 12h6v9h-6z" fill="#b0aeac"/><path d="M4 6h6v9H4zM12 2h6v10h-6z" fill="#ee7f3f"/>`,
        "Clustered bar chart": `${A}<path d="M2 3h12v3H2zM2 12h15v3H2z" fill="#ecbe7c"/><path d="M2 7h19v4H2zM2 16h12v4H2z" fill="#86aed6"/>`,
        "Clustered column chart": `${A}<path d="M3 9h4v12H3zM12 5h3v16h-3z" fill="#ecbe7c"/><path d="M7 1h4v20H7zM16 9h4v12h-4z" fill="#86aed6"/>`,
        "100% stacked bar chart": `${A}<path d="M2 4h6v5H2zM2 13h9v5H2z" fill="#7a7a7a"/><path d="M8 4h12v5H8zM11 13h9v5h-9z" fill="#86aed6"/>`,
        "100% stacked column chart": `${A}<path d="M4 13h5v8H4zM12 15h6v6h-6z" fill="#7a7a7a"/><path d="M4 2h5v11H4zM12 2h6v13h-6z" fill="#86aed6"/>`,
        "Line chart": `${A}<path d="M2 17l8-7 4-3 7-1" fill="none" stroke="#efb97a" stroke-width="1.300"/><path d="M2 12l5-5 6 5 8-7" fill="none" stroke="#4b80bd" stroke-width="1.500"/>`,
        "Area chart": `${A}<path d="M2 5l7 1 6-4 6 1v8H2z" fill="#f7d7a8"/><path d="M2 11l6-2 6 3 7-2v5H2z" fill="#8fb3d9"/><path d="M2 15l8 0 6-2 5 1v7H2z" fill="#ef8338"/>`,
        "Stacked area chart": `<path d="M1 5l5-3 6 5 6-6 4 4v14H1z" fill="#f2bc5f"/><path d="M1 11l5 2 6-4 5 4 5-3v7l-10 2-11-3z" fill="#4b80bd"/><path d="M1 17l5-2 5 3 5-3 6 3v3H1z" fill="#ee8b42"/>${A}`,
        "Line and stacked column chart": `${A}<path d="M5 4h5v10H5zM13 9h5v5h-5z" fill="#ecbe7c"/><path d="M5 14h5v7H5zM13 15h5v6h-5z" fill="#b0aeac"/><path d="M2 17l6-5 5 4 7-6" fill="none" stroke="#d9634c"/><path d="M21 1v20" stroke="#f0a05c" stroke-width="1.500"/>`,
        "Line and clustered column chart": `${A}<path d="M3 9h4v12H3zM12 5h3v16h-3z" fill="#f3cf9a"/><path d="M7 1h4v20H7zM16 9h3v12h-3z" fill="#86aed6"/><path d="M2 17l6-5 5 4 7-6" fill="none" stroke="#d9634c"/><path d="M21 1v20" stroke="#f0a05c" stroke-width="1.500"/>`,
        "Ribbon chart": `${A}<path d="M2 4h4v5H2zM6 12l4 3v4H6z" fill="#f3c98f"/><path d="M7 5h5v5H7zM13 4h6v5h-6z" fill="#b0aeac"/><path d="M3 11h4v5H3zM10 12h4v5h-4zM16 11h5v5h-5z" fill="#86aed6"/><path d="M8 14l3-6 2 11z" fill="#ecbe7c"/>`,
        "Waterfall chart": `${A}<path d="M3 4h3v16H3z" fill="#b0aeac"/><path d="M7 4h3v7H7z" fill="#d9725a"/><path d="M10 9h3v8h-3z" fill="#d9725a"/><path d="M14 3h3v13h-3z" fill="#71a793"/><path d="M18 1h2v19h-2z" fill="#b0aeac"/>`,
        "Scatter chart": `${A}<circle cx="6" cy="7" r="2" fill="#d9725a"/><circle cx="15" cy="5" r="2" fill="#71a793"/><circle cx="5" cy="15" r="2" fill="#4b80bd"/><circle cx="11" cy="12" r="2" fill="#ecbe7c"/><circle cx="20" cy="11" r="2" fill="#4b80bd"/><circle cx="16" cy="17" r="2" fill="#7a7a7a"/>`,
        "Pie chart": `<circle cx="11" cy="10" r="10" fill="#86aed6"/><path d="M11 10V0A10 10 0 0 0 1.500 8z" fill="#f3d3a5" stroke="#f3f2f1"/><path d="M11 10L1.500 8A10 10 0 0 0 5 18z" fill="#e8a27e" stroke="#f3f2f1"/>`,
        "Donut chart": `<circle cx="11" cy="11" r="8" fill="none" stroke="#4b80bd" stroke-width="5" stroke-dasharray="11 1"/><path d="M12 3q5 0 7 6" fill="none" stroke="#ecbe7c" stroke-width="5"/><path d="M8 3.500q2-1 4-.5" fill="none" stroke="#86aed6" stroke-width="5"/>`,
        "Treemap": `<path d="M1 1h20v20H1z" fill="#fff"/><path d="M6 1h9v10H6zM15 1h6v7h-6z" fill="#bed0ea"/><path d="M1 1h20v20H1zM6 1v11M1 6h5M1 12h20M15 1v11M11 12v9" fill="none" stroke="#808080" stroke-width="1.500"/>`,
        "Map": `<circle cx="11" cy="11" r="9.500" fill="#fff" stroke="#5a86bd" stroke-width="1.300"/><path d="M2 7h18M2 15h18M11 1.500v19M11 1.500q-9 9 0 19M11 1.500q9 9 0 19" fill="none" stroke="#71a793"/>`,
        "Filled map": `<path d="M1 3l8-1v5H1z" fill="#b0aeac"/><path d="M10 1h8v4l-7 3z" fill="#c8c6c4"/><path d="M18 1h4v9h-4z" fill="#f3cf9a"/><path d="M1 8h9v5H4z" fill="#86aed6"/><path d="M12 8h7v6h-7z" fill="#b0aeac"/><path d="M4 14l8-1 1 8H7z" fill="#c8c6c4"/><path d="M13 14l8-1-2 8h-5z" fill="#86aed6"/>`,
        "Shape map": `<path d="M0 2l10-2h12v12l-2 9H6L2 14z" fill="#4b80bd"/><path d="M3 8h6v4H3zM12 7h7v6h-7z" fill="#333"/><path d="M10 2h8v4l-7 1zM4 14l7-1v6H7z" fill="#86aed6"/><path d="M18 1h4v9h-4z" fill="#23407a"/>`,
        "Funnel": `<path d="M0 1h22v4H0zM6 11h10v3H6zM8 16h6v3H8z" fill="#86aed6"/><path d="M3 6h16v4H3z" fill="#ecbe7c"/>`,
        "Gauge": `<path d="M2.500 16a8.500 8.500 0 0 1 14-7" fill="none" stroke="#ecbe7c" stroke-width="4"/><path d="M16.500 8.500a9 9 0 0 1 3 7.500" fill="none" stroke="#71a793" stroke-width="4"/><path d="M10 15l6-5" stroke="#444" stroke-width="2.500"/>`,
        "Card": `${frame}<text x="11" y="12" class="card-number">123</text><path d="M4 15h14" stroke="#808080"/>`,
        "Multi-row card": `<path d="M1 1h20v20H1z" fill="#fff" stroke="#808080" stroke-width="1.500"/><path d="M3 3h3v16H3z" fill="#b0aeac"/><path d="M9 5h5M9 12h5M9 15h4" stroke="#86aed6" stroke-width="2"/><path d="M9 8h10" stroke="#ccc"/>`,
        "KPI": `${frame}<path d="M4 11l3-4 3 4z" fill="#71a793"/><path d="M11 6h6l-3 4z" fill="#d9725a"/><path d="M4 14h14" stroke="#808080"/>`,
        "Slicer": `<path d="M1 1h20v20H1z" fill="#fff" stroke="#ccc"/><path d="M0 0h21v4H0z" fill="#4b80bd"/><path d="M4 6h4v3H4zM4 15h4v3H4z" fill="#f3cf9a"/><path d="M4 10h4v4H4z" fill="#ecbe7c"/><path d="M11 11h12l-5 5v6l-2-1v-5z" fill="#777"/>`,
        "Python visual": `<text x="11" y="16" class="letters">Py</text>`,
        "Table": `<path d="M1 1h19v20H1z" fill="#fff" stroke="#a6a6a6"/><path d="M1 1h19v3H1z" fill="#86a5cf"/><path d="M1 9h19M1 15h19M7.500 4v17M14 4v17" stroke="#a6a6a6"/>`,
        "Matrix": `<path d="M1 1h19v20H1z" fill="#fff" stroke="#a6a6a6"/><path d="M14 4h6v17H1v-5h13z" fill="#c4d4ec"/><path d="M1 1h19v3H1z" fill="#4b80bd"/><path d="M1 9h19M1 15h19M7.500 4v17M14 4v17" stroke="#a6a6a6"/>`,
        "R script visual": `<text x="11" y="20" class="letter-r">R</text>`,
        "Key influencers": `${A}<path d="M5 4h6M5 9h4M5 14h3" stroke="#aaa"/><circle cx="10" cy="7" r="2" fill="#7a7a7a"/><circle cx="8" cy="12" r="2" fill="#7a7a7a"/><circle cx="6" cy="17" r="2" fill="#7a7a7a"/><circle cx="19" cy="2" r="2" fill="#4b80bd"/><circle cx="20" cy="18" r="3" fill="#f0bd74"/>`,
        "ArcGIS map": `<circle cx="11" cy="11" r="10" fill="#c9d4d8" stroke="#889"/><circle cx="11" cy="11" r="8" fill="#1f72c4"/><path d="M5 6l6-3 3 3-4 5-5 1zM13 12l5-2-1 6-4 2z" fill="#2fa653"/><path d="M3 11h16M11 2q-6 9 0 18M11 2q6 9 0 18" fill="none" stroke="#cfe1ee" stroke-width=".8"/>`,
        "More visuals": `<path d="M3 9h2v2H3zM10 9h2v2h-2zM17 9h2v2h-2z" fill="#333"/>`
    };

    drawCountries();
    drawStacked();
    drawCategories();
    drawPie();
    drawLine();
    document.getElementById("vizGrid").innerHTML = Object.keys(vizIcons).map(function (name) {
        return `<button aria-label="${name}"><svg width="22" height="22" viewBox="0 0 22 22">${vizIcons[name]}</svg></button>`;
    }).join("");
</script>
</body>
</html>
```
FILE: styles.css
```css
* {
    box-sizing: border-box;
}

body {
    margin: 0;
    min-height: 100vh;
    display: flex;
    flex-direction: column;
    font-family: "Open Sans", "DejaVu Sans", sans-serif;
    font-size: 12px;
    color: #252423;
    background: #f3f2f1;
    overflow: hidden;
}

button {
    font: inherit;
    color: inherit;
    background: none;
    border: 0;
    padding: 0;
}

a {
    color: inherit;
    text-decoration: none;
}

h2, h3, ul {
    margin: 0;
    padding: 0;
    font-weight: normal;
    list-style: none;
}

svg {
    display: block;
    flex: none;
}

.defs {
    position: absolute;
}

/* title bar */
.titlebar {
    display: flex;
    align-items: center;
    height: 29px;
    background: #fff;
}

.divider {
    width: 1px;
    height: 16px;
    margin: 0 14px 0 6px;
    background: #999;
}

.quick {
    margin-right: 8px;
}

.titlebar .divider + .window-title {
    margin-left: -7px;
    font-size: 14px;
}

.window-buttons {
    display: flex;
    gap: 44px;
    margin-left: auto;
    padding-right: 25px;
}

/* ribbon tabs */
.ribbon-tabs {
    display: flex;
    height: 29px;
    background: #fff;
    border-bottom: 1px solid #d5d8d8;
    font-size: 13px;
    line-height: 29px;
    text-align: center;
}

.file {
    width: 70px;
    height: 28px;
    color: #fff;
    background: #1a76c7;
}

.home {
    width: 93px;
    height: 29px;
    background: #f5f6f7;
    border: 1px solid #d5d8d8;
    border-bottom: 0;
    line-height: 28px;
}

.view {
    width: 63px;
}

.modeling {
    width: 90px;
}

.help {
    width: 86px;
}

.account {
    display: flex;
    align-items: center;
    margin-left: auto;
    padding-right: 4px;
    font-size: 14px;
}

.account button {
    margin-left: 29px;
}

.account .help-button {
    width: 19px;
    height: 19px;
    margin-left: 9px;
    border-radius: 50%;
    background: #1a76c7;
    color: #fff;
    font-weight: bold;
    line-height: 19px;
}

/* ribbon */
.ribbon {
    display: flex;
    height: 113px;
    padding-top: 2px;
    background: #f5f6f7;
    border-bottom: 1px solid #d5d8d8;
}

.group {
    display: flex;
    flex-direction: column;
    height: 108px;
    border-right: 1px solid #dfe1e3;
}

.group h2 {
    margin-top: auto;
    font-size: 12px;
    line-height: 16px;
    text-align: center;
    color: #444;
}

.tools {
    display: flex;
    padding: 5px 0 0 2px;
}

.clipboard .tools, .calc .tools {
    padding-left: 4px;
}

.custom .tools, .themes .tools, .share .tools {
    padding-left: 0;
}

.clipboard {
    width: 180px;
}

.external {
    width: 299px;
}

.insert {
    width: 302px;
}

.custom {
    width: 139px;
}

.themes {
    width: 66px;
}

.relations {
    width: 94px;
}

.calc {
    width: 159px;
}

.share {
    width: 62px;
}

.big {
    display: flex;
    flex-direction: column;
    align-items: center;
    gap: 4px;
    width: 52px;
    line-height: 17px;
    white-space: nowrap;
}

.w44 {
    width: 44px;
}

.w50 {
    width: 50px;
}

.w58 {
    width: 58px;
}

.w60 {
    width: 60px;
}

.w66 {
    width: 66px;
}

.w84 {
    width: 84px;
}

.disabled {
    color: #7d7d7d;
}

.caret {
    display: inline-block;
    margin-left: 4px;
    vertical-align: 3px;
    border: 3px solid transparent;
    border-top-color: #252423;
    border-bottom: 0;
}

.separator {
    width: 1px;
    height: 56px;
    margin: 8px 1px 0;
    background: #d5d8d8;
}

.stack {
    display: flex;
    flex-direction: column;
    margin-top: -3px;
    padding-left: 4px;
}

.small {
    display: flex;
    align-items: center;
    gap: 4px;
    height: 26px;
    white-space: nowrap;
}

/* main area */
.workspace {
    display: flex;
    flex: 1;
}

.left {
    display: flex;
    flex-direction: column;
    flex: 1;
}

.stage {
    display: flex;
    flex: 1;
}

.rail {
    width: 52px;
    border-right: 1px solid #c8c6c4;
    background: #f3f2f1;
}

.rail button {
    display: flex;
    align-items: center;
    width: 51px;
    height: 53px;
    padding-left: 15px;
    border-left: 0 solid #f2c811;
}

.rail .active {
    padding-left: 11px;
    border-left-width: 4px;
}

.canvas {
    flex: 1;
    background: #fff;
    border-right: 1px solid #aaa;
}

.row-top {
    display: grid;
    grid-template-columns: minmax(0, 421fr) minmax(0, 458fr) minmax(0, 500fr);
    position: relative;
    z-index: 1;
}

.row-bottom {
    display: grid;
    grid-template-columns: minmax(0, 560fr) minmax(0, 178fr) minmax(0, 641fr);
}

.visual svg {
    width: 100%;
    height: auto;
    overflow: visible;
}

.cover {
    background: #fff;
}

.page-edge {
    margin: 0 2px;
    border-top: 2px dotted #555;
}

/* chart text */
.title {
    font-size: 16px;
    fill: #252423;
    text-anchor: middle;
}

.long {
    font-size: 15px;
}

.wide {
    font-size: 17px;
}

.navy {
    font-size: 18px;
    fill: #12239e;
}

.tick, .key {
    font-size: 12px;
    fill: #605e5c;
    text-anchor: middle;
}

.key {
    font-size: 14px;
}

.end {
    text-anchor: end;
}

.start {
    text-anchor: start;
}

.value {
    font-size: 12px;
    font-weight: 600;
    fill: #fff;
    text-anchor: middle;
}

.axis {
    font-size: 13px;
    fill: #252423;
    text-anchor: middle;
}

.small-axis {
    font-size: 10px;
}

.year {
    font-size: 11px;
}

.gridline {
    stroke: #e6e6e6;
    stroke-dasharray: 1 5;
}

.leader {
    fill: none;
    stroke: #a6a6a6;
}

.legend {
    padding: 19px 0 0 9px;
    color: #605e5c;
}

.legend h3 {
    margin-bottom: 1px;
    font-size: 12px;
    font-weight: 600;
    line-height: 16px;
}

.legend li {
    display: flex;
    align-items: center;
    gap: 3px;
    height: 27px;
    font-size: 13px;
}

.legend button {
    margin: 27px 0 0 49px;
}

.filters {
    display: flex;
    flex-direction: column;
    align-items: center;
    width: 39px;
    padding-top: 22px;
    background: #fff;
}

.filters > svg {
    margin: 40px 0 16px 6px;
}

.filters h2 {
    font-size: 18px;
    font-weight: 600;
    line-height: 24px;
    writing-mode: vertical-rl;
}

/* page tabs */
.page-tabs {
    display: flex;
    align-items: center;
    height: 43px;
    padding-left: 52px;
    background: linear-gradient(to right, #f3f2f1 52px, #e9e9e9 52px);
}

.arrow {
    width: 23px;
    padding-left: 8px;
}

.page {
    height: 43px;
    padding: 0 26px;
    font-size: 14px;
    color: #444;
}

.page.current {
    padding-right: 10px;
    background: #fff;
    border-bottom: 2px solid #f2c811;
    color: #000;
}

.close {
    height: 43px;
    width: 15px;
    padding-bottom: 20px;
    background: #fff;
    border-bottom: 2px solid #f2c811;
    border-right: 1px solid #c8c6c4;
    font-size: 12px;
}

.add {
    display: grid;
    place-items: center;
    width: 49px;
    height: 43px;
    padding-top: 5px;
    background: #f2c811;
}

/* right panes */
.viz {
    width: 227px;
    border-left: 1px solid #d8d6d4;
    border-right: 1px solid #d8d6d4;
}

.fields {
    width: 222px;
}

.pane-head {
    display: flex;
    align-items: center;
    justify-content: space-between;
    height: 62px;
    padding: 0 15px;
}

.pane-head h2, .drill {
    font-size: 18px;
    font-weight: 600;
    line-height: 26px;
    color: #484644;
}

.fields .pane-head {
    padding-right: 12px;
}

.viz-grid {
    display: grid;
    grid-template-columns: repeat(6, 35px);
    grid-auto-rows: 30px;
    height: 184px;
    padding: 1px 0 0 11px;
    border-bottom: 1px solid #d8d6d4;
}

.viz-grid svg {
    overflow: visible;
}

.card-number {
    font-size: 8px;
    fill: #4b80bd;
    text-anchor: middle;
}

.letters, .letter-r {
    font-size: 17px;
    font-weight: 600;
    fill: #86aed6;
    text-anchor: middle;
}

.letter-r {
    font-size: 25px;
}

.viz-tabs {
    display: flex;
    padding: 9px 15px 0;
}

.viz-tabs button {
    display: flex;
    justify-content: center;
    width: 50px;
    height: 36px;
}

.viz-tabs .on {
    border-bottom: 5px solid #f2c811;
    border-radius: 3px;
}

.viz h3 {
    padding: 8px 15px 6px;
    font-size: 14px;
    line-height: 20px;
}

.viz h3.inset {
    padding: 0 11px;
}

.dropzone {
    height: 35px;
    margin: 0 8px 0 5px;
    padding-left: 13px;
    background: #fff;
    border: 1px dashed #c8c6c4;
    border-radius: 2px;
    font-size: 14px;
    line-height: 33px;
}

.dropzone.second {
    padding-left: 10px;
}

.drill {
    padding: 17px 17px 18px;
}

.toggle {
    display: flex;
    align-items: center;
    gap: 6px;
    height: 52px;
    padding-left: 22px;
    font-size: 14px;
}

.toggle + h3 {
    margin-top: 8px;
}

.toggle input {
    appearance: none;
    width: 37px;
    height: 15px;
    margin: 0;
    background:
        radial-gradient(circle at 8px 50%, #f3f2f1 4px, #605e5c 5px, #605e5c 7px, transparent 8px),
        linear-gradient(#605e5c, #605e5c) 8px 7px / 29px 2px no-repeat;
}

.toggle input:checked {
    background:
        radial-gradient(circle at 29px 50%, #605e5c 7px, transparent 8px),
        linear-gradient(#605e5c, #605e5c) 0 7px / 29px 2px no-repeat;
}

.field-search {
    display: flex;
    align-items: center;
    gap: 10px;
    height: 38px;
    margin: 3px 2px 5px 5px;
    padding-left: 14px;
    background: #fff;
    border: 1px solid #c8c6c4;
    border-radius: 2px;
}

input[type="search"], input[type="text"] {
    flex: 1;
    min-width: 0;
    padding: 0;
    border: 0;
    outline: 0;
    background: none;
    font: 14px "Open Sans", sans-serif;
}

input::placeholder {
    color: #333;
    opacity: 1;
}

.tables {
    padding: 9px 5px;
    border-top: 1px solid #d8d6d4;
}

.tables button {
    display: flex;
    align-items: center;
    height: 34px;
    font-size: 14px;
}

.tables svg + svg {
    margin: 0 14px 0 10px;
}

/* status bar and taskbar */
.status {
    height: 26px;
    padding-left: 6px;
    font-size: 13px;
    line-height: 28px;
}

.taskbar {
    display: flex;
    height: 50px;
    background: #1f1d1c;
    color: #fff;
}

.start-button {
    width: 60px;
    padding-left: 20px;
}

.taskbar .task-search {
    display: flex;
    align-items: center;
    gap: 14px;
    width: 430px;
    padding-left: 14px;
    background: #f3f2f1;
    border: 1px solid #b5b3b1;
}

.taskbar .task-search input {
    font-size: 18px;
}

.apps {
    display: flex;
}

.apps button {
    display: grid;
    place-items: center;
    width: 62px;
}

.apps .open {
    background: linear-gradient(#76b9ed, #76b9ed) center bottom / 51px 3px no-repeat;
}

.apps .focused {
    background: linear-gradient(#76b9ed, #76b9ed) center bottom / 62px 3px no-repeat #4a4847;
}

.tray {
    display: flex;
    align-items: center;
    gap: 11px;
    margin-left: auto;
    padding-right: 30px;
    font-size: 14px;
}

.tray time {
    width: 84px;
    line-height: 23px;
    text-align: center;
}

.notify {
    margin-left: 7px;
}

/* overlays */
.activate {
    position: absolute;
    right: 81px;
    bottom: 98px;
    width: 285px;
    display: flex;
    flex-direction: column;
    color: #b5b3b1;
    font-size: 17px;
    line-height: 26px;
    white-space: nowrap;
    pointer-events: none;
}

.activate strong {
    font-size: 24px;
    font-weight: normal;
    line-height: 32px;
}

.watermark {
    position: absolute;
    z-index: 2;
    left: 44%;
    bottom: 22px;
    width: 12%;
    display: flex;
    flex-direction: column;
    align-items: center;
    color: #a9adac;
    opacity: .4;
    font-family: "DejaVu Sans", sans-serif;
    font-size: 64px;
    font-weight: bold;
    line-height: 72px;
    pointer-events: none;
}

.watermark .site {
    font-family: "Liberation Sans", sans-serif;
    font-size: 38px;
    line-height: 40px;
}
```
